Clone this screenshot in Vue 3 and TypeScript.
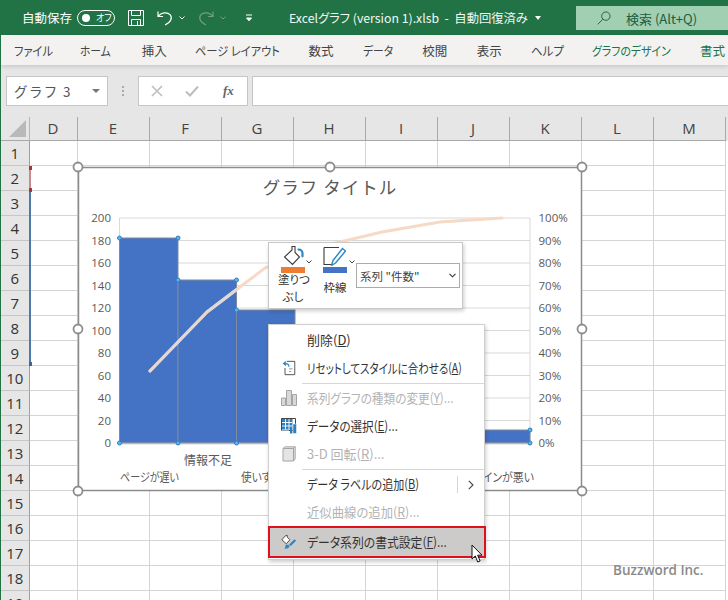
<script setup lang="ts">
const tabs = [
  { t: 'ファイル', w: 38, sx: .9 }, { t: 'ホーム', w: 33, sx: .86 }, { t: '挿入', w: 25, sx: 1 },
  { t: 'ページ レイアウト', w: 85, sx: .9 }, { t: '数式', w: 26, sx: 1 }, { t: 'データ', w: 31, sx: .86 },
  { t: '校閲', w: 26, sx: 1 }, { t: '表示', w: 26, sx: 1 }, { t: 'ヘルプ', w: 32, sx: .92 }
]
const contextTabs = [
  { t: 'グラフのデザイン', w: 80, sx: .87 }, { t: '書式', w: 27, sx: 1 }
]
const cols = [
  { name: 'D', w: 48 }, { name: 'E', w: 72 }, { name: 'F', w: 72 }, { name: 'G', w: 72 },
  { name: 'H', w: 72 }, { name: 'I', w: 72 }, { name: 'J', w: 72 }, { name: 'K', w: 72 },
  { name: 'L', w: 72 }, { name: 'M', w: 72 }
]
const rows = Array.from({ length: 19 }, (_, i) => i + 1)
const leftAxis = [200, 180, 160, 140, 120, 100, 80, 60, 40, 20, 0]
const gridY = leftAxis.map((_, i) => 218 + i * 22.5)
const handles = [
  [78, 167], [330, 167], [582, 167], [78, 329], [582, 329], [78, 491], [330, 491], [582, 491]
]
const points = [
  [119.5, 238], [178, 238], [178, 280], [236.5, 280], [236.5, 310],
  [119.5, 443], [178, 443], [236.5, 443], [530, 430], [530, 443]
]
const bars = [
  { x: 119.5, y: 238, w: 58.5 }, { x: 178, y: 280, w: 58.5 }, { x: 236.5, y: 310, w: 58.5 },
  { x: 295, y: 350, w: 58.5 }, { x: 471.5, y: 430, w: 58.5 }
]
interface Item { label: string; key: string; tail: string; sx: number; icon?: string; off?: boolean; sub?: boolean; sep?: boolean; hot?: boolean }
const items: Item[] = [
  { label: '削除(', key: 'D', tail: ')', sx: 1 },
  { label: 'リセットしてスタイルに合わせる(', key: 'A', tail: ')', sx: .806, icon: 'reset', sep: true },
  { label: '系列グラフの種類の変更(', key: 'Y', tail: ')...', sx: .896, icon: 'type', off: true },
  { label: 'データの選択(', key: 'E', tail: ')...', sx: .89, icon: 'data' },
  { label: '3-D 回転(', key: 'R', tail: ')...', sx: 1, icon: 'cube', off: true, sep: true },
  { label: 'データ ラベルの追加(', key: 'B', tail: ')', sx: .85, sub: true },
  { label: '近似曲線の追加(', key: 'R', tail: ')...', sx: .95, off: true },
  { label: 'データ系列の書式設定(', key: 'F', tail: ')...', sx: .91, icon: 'format', hot: true }
]
</script>

<template>
  <div class="app">
    <header class="titlebar">
      <span class="autosave">自動保存</span>
      <span class="toggle"><i class="knob"></i><em>オフ</em></span>
      <svg class="qa save" viewBox="0 0 16 16"><path d="M.5.5h15v15H.5zM3.500.5v5h9v-5M3.500 15.500v-6h9v6M9.500 11v4" fill="none" stroke="#fff" /></svg>
      <svg class="qa undo" viewBox="0 0 16 16"><path d="M1 1.500v5h5M1.300 6.200C4 2.600 10 1.500 13 4.700c2.500 2.800 1.500 7.300-5 10.300" fill="none" stroke="#fff" stroke-width="1.200" /></svg>
      <svg class="chev" viewBox="0 0 6 4"><path d="M.5.5 3 3 5.500.5" fill="none" stroke="#fff" /></svg>
      <svg class="qa redo" viewBox="0 0 16 16"><path d="M15 1.500v5h-5M14.700 6.200C12 2.600 6 1.500 3 4.700.5 7.500 1.500 12 8 15" fill="none" stroke="#6f9f84" stroke-width="1.200" /></svg>
      <svg class="chev dim" viewBox="0 0 6 4"><path d="M.5.5 3 3 5.500.5" fill="none" stroke="#6f9f84" /></svg>
      <svg class="more" viewBox="0 0 8 8"><path d="M1 1h6M1.500 4 4 6.800 6.500 4z" fill="#fff" stroke="#fff" /></svg>
      <span class="doc">Excelグラフ (version 1).xlsb&nbsp; -&nbsp; 自動回復済み<i class="caret"></i></span>
      <div class="search">
        <svg viewBox="0 0 15 15"><circle cx="9.500" cy="5.500" r="4.500" fill="none" stroke="#225e3c" /><path d="M6.300 8.800.8 14.300" stroke="#225e3c" /></svg>
        <span>検索 (Alt+Q)</span>
      </div>
    </header>

    <nav class="tabs">
      <span v-for="t in tabs" :key="t.t" class="tab" :style="{ width: t.w + 'px' }"><b :style="{ transform: `scaleX(${t.sx})` }">{{ t.t }}</b></span>
      <span v-for="t in contextTabs" :key="t.t" class="tab ctx" :style="{ width: t.w + 'px' }"><b :style="{ transform: `scaleX(${t.sx})` }">{{ t.t }}</b></span>
    </nav>

    <div class="formula">
      <div class="namebox"><span>グラフ 3</span><i class="caret dark"></i></div>
      <div class="dots"><i></i><i></i><i></i></div>
      <div class="fbtns">
        <svg viewBox="0 0 12 12"><path d="M1 1l10 10M11 1 1 11" stroke="#bdbdbd" stroke-width="1.600" /></svg>
        <svg viewBox="0 0 14 12"><path d="M1 6.500 5 10.500 13 1.500" fill="none" stroke="#bdbdbd" stroke-width="2" /></svg>
        <span class="fx">fx</span>
      </div>
      <div class="finput"></div>
    </div>

    <main class="sheet">
      <div class="colhead">
        <div class="corner"><i></i></div>
        <div v-for="c in cols" :key="c.name" class="colcell" :style="{ width: c.w + 'px' }">{{ c.name }}</div>
      </div>
      <div v-for="r in rows" :key="r" class="row">
        <div class="rowhead">{{ r }}</div>
        <div v-for="c in cols" :key="c.name" class="cell" :style="{ width: c.w + 'px' }"></div>
      </div>

      <i class="range red"></i>
      <i class="range blue"></i>

      <svg class="chart" viewBox="78 167 504 324">
        <rect x="78.500" y="167.500" width="503" height="323" fill="#fff" stroke="#8c8c8c" stroke-width="1.500" />
        <text x="330" y="194" class="ctitle" text-anchor="middle">グラフ タイトル</text>
        <line v-for="y in gridY" :key="y" x1="119.500" x2="530" :y1="y" :y2="y" stroke="#d9d9d9" />
        <line x1="119.500" x2="119.500" y1="218" y2="443" stroke="#d9d9d9" />
        <line x1="530" x2="530" y1="218" y2="443" stroke="#d9d9d9" />
        <text v-for="(v, i) in leftAxis" :key="'l' + v" x="111" :y="gridY[i] + 4" text-anchor="end" class="tick">{{ v }}</text>
        <text v-for="(v, i) in leftAxis" :key="'r' + v" x="538.500" :y="gridY[i] + 4" class="tick">{{ v * 0.5 }}%</text>
        <rect v-for="b in bars" :key="b.x" :x="b.x" :y="b.y" :width="b.w" :height="443 - b.y" fill="#4472c4" stroke="#7f8a9c" />
        <line x1="119.500" x2="530" y1="443.500" y2="443.500" stroke="#b5b5b5" stroke-width="1.500" />
        <polyline points="150,371 207,312 236,290 265,268 323,246 382,232 440,222 502,218" fill="none" stroke="#f6d9c6" stroke-width="3" stroke-linecap="round" stroke-linejoin="round" />
        <polyline points="150,371 207,312 236,290" fill="none" stroke="#e2d8d4" stroke-width="3" stroke-linecap="round" stroke-linejoin="round" />
        <circle v-for="p in points" :key="p.join()" :cx="p[0]" :cy="p[1]" r="2" fill="#62b4ec" stroke="#2c7fc4" />
        <text x="208" y="465" text-anchor="middle" class="cat">情報不足</text>
        <text x="120" y="482" class="cat" textLength="59" lengthAdjust="spacingAndGlyphs">ページが遅い</text>
        <text x="241" y="482" class="cat" textLength="50" lengthAdjust="spacingAndGlyphs">使いずらい</text>
        <text x="462" y="482" class="cat" textLength="72" lengthAdjust="spacingAndGlyphs">デザインが悪い</text>
        <circle v-for="h in handles" :key="h.join()" :cx="h[0]" :cy="h[1]" r="4.500" fill="#fff" stroke="#8c8c8c" stroke-width="1.800" />
      </svg>

      <div class="mini">
        <div class="mini-btn paint">
          <svg class="ico" viewBox="0 0 24 24"><path d="M10 1.500h3v6l4.500 4.500-7 7.500L2.500 12 10 5z" fill="#fff" stroke="#3c3c3c" stroke-width="1.100" /><path d="M16.500 4.500c2.500 0 4 1.800 4 3.800v3" fill="none" stroke="#2a86c8" stroke-width="2.200" stroke-linecap="round" /></svg>
          <svg class="chev2" viewBox="0 0 6 4"><path d="M.5.5 3 3 5.500.5" fill="none" stroke="#444" /></svg>
          <i class="swatch orange"></i>
          <span class="mini-label two">塗りつ<br />ぶし</span>
        </div>
        <div class="mini-btn outline">
          <svg class="ico" viewBox="0 0 24 24"><path d="M1 2.500h15M1 2.500v17h7" fill="none" stroke="#3c3c3c" stroke-width="1.100" /><path d="M8.500 20.500 10 15.500 19.500 3.500l3 2.500-10 12z" fill="#fff" stroke="#2a86c8" stroke-width="1.400" stroke-linejoin="round" /></svg>
          <svg class="chev2" viewBox="0 0 6 4"><path d="M.5.5 3 3 5.500.5" fill="none" stroke="#444" /></svg>
          <i class="swatch steel"></i>
          <span class="mini-label">枠線</span>
        </div>
        <div class="mini-select">
          <span>系列 "件数"</span>
          <svg viewBox="0 0 7 5"><path d="M.5.800 3.500 3.800 6.500.8" fill="none" stroke="#333" stroke-width="1.100" /></svg>
        </div>
      </div>

      <ul class="menu">
        <li v-for="it in items" :key="it.label" :class="{ off: it.off, sep: it.sep, hot: it.hot }">
          <span class="mi">
            <svg v-if="it.icon === 'reset'" viewBox="0 0 16 18"><path d="M5.500 1.500h9v15h-11V9" fill="#fff" stroke="#444" /><path d="M.8 4 4.500 1v6z" fill="#2a86c8" /><path d="M4 4c2.500 0 4 1 4 3.500" fill="none" stroke="#2a86c8" stroke-width="1.300" /><path d="M8 10h4M8 13h2.500" stroke="#888" /></svg>
            <svg v-else-if="it.icon === 'type'" viewBox="0 0 16 16"><path d="M.5 8h4v7.500h-4zM5.500 .5h5v15h-5zM11.500 4.500h4v11h-4z" fill="#d8d8d8" stroke="#a5a5a5" /></svg>
            <svg v-else-if="it.icon === 'data'" viewBox="0 0 16 16"><path d="M.5.500h14v12H.5z" fill="#fff" stroke="#444" /><path d="M1 1h10.500v10.500H1z" fill="#2d7fc0" /><path d="M4.500 1v10.500M8 1v10.500M1 4.500h10.500M1 8h10.500" stroke="#fff" stroke-width=".9" /><path d="M9 11h2.500v4.500H9z" fill="#2d7fc0" /><path d="M12 6h3.500v9.500H12z" fill="#2d7fc0" stroke="#fff" stroke-width=".5" /><path d="M.5 12.500h7.500v3H.5z" fill="#fff" /></svg>
            <svg v-else-if="it.icon === 'cube'" viewBox="0 0 14 16"><path d="M1 2.500 3 .8h10.200v12L11.500 15H1z" fill="#e4e4e4" stroke="#a5a5a5" /><path d="M1 2.500h10.500V15M11.500 2.500 13 .8" fill="none" stroke="#a5a5a5" /></svg>
            <svg v-else-if="it.icon === 'format'" viewBox="0 0 18 17"><path d="M5 1.500 1 6l5 4.500L10 6 7 3V1z" fill="#fff" stroke="#3c3c3c" /><path d="M9 11.500 15 5.500l2 1.500-6 6z" fill="#2a86c8" /><path d="M5 12c2-.8 4-.3 4.500 1 .3 1.800-2.500 3.500-5.500 3 1.200-.8.800-3 1-4z" fill="#2a86c8" /></svg>
          </span>
          <span class="txt" :style="{ transform: `scaleX(${it.sx})` }">{{ it.label }}<u>{{ it.key }}</u>{{ it.tail }}</span>
          <span v-if="it.sub" class="sub"><svg viewBox="0 0 6 10"><path d="M.8.800 5 5 .8 9.200" fill="none" stroke="#444" stroke-width="1.100" /></svg></span>
        </li>
      </ul>

      <svg class="cursor" viewBox="0 0 14 20"><path d="M1 1v14l3.300-3 2.400 6 2.400-1-2.400-5.800H11z" fill="#fff" stroke="#111" /></svg>
      <span class="mark">Buzzword Inc.</span>
    </main>
  </div>
</template>

<style scoped>
.app {
  width: 728px;
  height: 600px;
  overflow: hidden;
  position: relative;
  background: #e6e6e6;
  font-family: "Noto Sans CJK JP", "Noto Sans", sans-serif;
  font-feature-settings: "palt";
  border-left: 1px solid #217346;
  box-sizing: border-box;
}
.titlebar {
  height: 35px;
  margin-left: -1px;
  background: #217346;
  color: #fff;
  display: flex;
  align-items: center;
  font-size: 12.500px;
  padding-left: 22px;
  position: relative;
}
.autosave { width: 55px; }
.toggle {
  width: 38px;
  height: 16px;
  box-sizing: border-box;
  border: 1px solid #fff;
  border-radius: 8px;
  display: flex;
  align-items: center;
  padding-left: 4px;
  font-size: 9px;
}
.knob { width: 8px; height: 8px; border-radius: 50%; background: #fff; }
.toggle em { margin-left: 6px; font-style: normal; line-height: 1; }
.qa { width: 16px; height: 16px; flex: none; }
.save { margin-left: 13px; }
.undo { margin-left: 13px; }
.chev { width: 6px; height: 4px; margin-left: 6px; flex: none; }
.redo { margin-left: 13px; }
.chev.dim { margin-left: 6px; }
.more { width: 8px; height: 8px; margin-left: 19px; flex: none; }
.doc { margin-left: 36px; white-space: nowrap; font-size: 12.300px; display: flex; align-items: center; color: #f2f8f4; }
.caret {
  width: 0;
  height: 0;
  border: 3px solid transparent;
  border-top: 4px solid #fff;
  border-bottom: 0;
  margin-left: 7px;
}
.search {
  position: absolute;
  left: 576px;
  right: 0;
  top: 6px;
  height: 24px;
  background: #a0cfb2;
  color: #1f5c3b;
  display: flex;
  align-items: center;
  padding-left: 21px;
  font-size: 13px;
}
.search svg { width: 14px; height: 14px; margin-right: 15px; }
.tabs {
  height: 30px;
  background: #f3f2f1;
  display: flex;
  align-items: center;
  gap: 28.400px;
  padding-left: 13px;
  font-size: 12.500px;
  color: #444;
  white-space: nowrap;
  box-shadow: 0 2px 4px rgba(0, 0, 0, .12);
  position: relative;
}
.tab { flex: none; }
.tab b { display: inline-block; font-weight: 400; transform-origin: left center; }
.tabs .ctx { color: #217346; }
.formula {
  height: 52px;
  box-sizing: border-box;
  padding: 11px 0 11px 5px;
  display: flex;
  background: #e6e6e6;
}
.namebox, .fbtns, .finput {
  background: #fff;
  border: 1px solid #c6c6c6;
  box-sizing: border-box;
}
.namebox {
  width: 102px;
  display: flex;
  align-items: center;
  justify-content: space-between;
  padding: 0 7px;
  font-size: 13.500px;
  color: #555;
  letter-spacing: 1.400px;
  font-feature-settings: normal;
}
.caret.dark { border-top-color: #777; border-width: 4px; border-top-width: 4px; border-bottom: 0; margin: 0; }
.dots {
  width: 30px;
  display: flex;
  flex-direction: column;
  align-items: center;
  justify-content: center;
  gap: 2px;
}
.dots i { width: 2px; height: 2px; background: #aaa; }
.fbtns {
  width: 110px;
  display: flex;
  align-items: center;
  padding-left: 12px;
  gap: 22px;
}
.fbtns svg:first-child { width: 12px; height: 12px; }
.fbtns svg:nth-child(2) { width: 14px; height: 12px; }
.fx {
  font-family: "Liberation Serif", serif;
  font-style: italic;
  font-weight: 700;
  font-size: 13px;
  color: #666;
  margin-left: 2px;
}
.finput { flex: 1; margin-left: 4px; border-right: 0; }
.sheet { background: #fff; position: absolute; left: -1px; right: 0; top: 117px; bottom: 0; }
.colhead {
  height: 24px;
  display: flex;
  background: #e6e6e6;
  box-sizing: content-box;
}
.corner {
  width: 29.500px;
  flex: none;
  position: relative;
  border-bottom: 1px solid #a8a8a8;
  box-sizing: border-box;
  border-right: 1px solid #b5b5b5;
}
.corner i {
  position: absolute;
  left: 9px;
  bottom: 3px;
  border-style: solid;
  border-width: 0 0 17px 17px;
  border-color: transparent transparent #b9b9b9 transparent;
}
.colcell {
  flex: none;
  box-sizing: border-box;
  border-right: 1px solid #a8a8a8;
  border-bottom: 1px solid #a8a8a8;
  font: 15px/23px "Open Sans", sans-serif;
  color: #444;
  text-align: center;
}
.row { display: flex; height: 25px; }
.rowhead {
  width: 29.500px;
  flex: none;
  box-sizing: border-box;
  background: #e6e6e6;
  border-right: 1px solid #9f9f9f;
  border-bottom: 1px solid #c6c6c6;
  font: 15px/24px "Open Sans", sans-serif;
  color: #333;
  text-align: center;
  padding-left: 1px;
}
.cell {
  flex: none;
  box-sizing: border-box;
  border-right: 1px solid #d4d4d4;
  border-bottom: 1px solid #d4d4d4;
}
.range { position: absolute; left: 29px; width: 2px; }
.range.red { top: 49px; height: 26px; background: #c98a8e; }
.range.red::before, .range.red::after {
  content: "";
  position: absolute;
  left: 0;
  width: 3px;
  height: 4px;
  background: #a8343c;
}
.range.red::before { top: 0; }
.range.red::after { bottom: 0; }
.range.blue { top: 75px; height: 174px; background: #4d7aa8; }
.range.blue::after {
  content: "";
  position: absolute;
  left: 0;
  bottom: 0;
  width: 3px;
  height: 4px;
  background: #3565a8;
}
.chart { position: absolute; left: 78px; top: 50px; width: 504px; height: 324px; overflow: visible; }
.ctitle { font-size: 17.500px; fill: #595959; letter-spacing: 1px; font-feature-settings: normal; }
.tick { font-family: "Open Sans", sans-serif; font-size: 11.500px; fill: #595959; }
.cat { font-size: 12px; fill: #595959; }
.mini {
  position: absolute;
  left: 268px;
  top: 125px;
  width: 195px;
  height: 67px;
  box-sizing: border-box;
  background: #fff;
  border: 1px solid #c8c8c8;
  box-shadow: 1px 2px 4px rgba(0, 0, 0, .2);
  display: flex;
  padding-left: 9px;
}
.mini-btn { position: relative; width: 45px; }
.ico { position: absolute; left: 4px; top: 2px; width: 24px; height: 24px; }
.mini-btn.outline .ico { left: 0; top: 2px; }
.chev2 { position: absolute; left: 28px; top: 17px; width: 6px; height: 4px; }
.mini-btn.outline .chev2 { left: 26px; }
.swatch { position: absolute; left: 3px; top: 24px; width: 24px; height: 6px; }
.mini-btn.outline .swatch { left: 0; }
.orange { background: #ed7d31; }
.steel { background: #4472c4; }
.mini-label {
  position: absolute;
  left: 0;
  top: 30px;
  width: 30px;
  text-align: center;
  font-size: 11.500px;
  line-height: 17px;
  color: #333;
  white-space: nowrap;
}
.mini-btn.outline .mini-label { left: -3px; top: 36px; }
.mini-btn.paint .mini-label { top: 28px; }
.mini-btn.outline { margin-left: 0; width: 33px; }
.mini-select {
  width: 104px;
  height: 25px;
  margin-top: 20px;
  box-sizing: border-box;
  border: 1px solid #ababab;
  display: flex;
  align-items: center;
  justify-content: space-between;
  padding: 0 3px;
  font-size: 11.500px;
  color: #444;
}
.mini-select svg { width: 7px; height: 5px; }
.menu {
  position: absolute;
  left: 268px;
  top: 207px;
  width: 217px;
  margin: 0;
  padding: 1px 0 0;
  list-style: none;
  background: #fff;
  border: 1px solid #cfcfcf;
  box-sizing: border-box;
  box-shadow: 1px 2px 4px rgba(0, 0, 0, .2);
  height: 236px;
}
.menu li {
  height: 28px;
  display: flex;
  align-items: center;
  font-size: 13px;
  color: #333;
  white-space: nowrap;
  position: relative;
  box-sizing: border-box;
}
.menu li.sep::after {
  content: "";
  position: absolute;
  left: 33px;
  right: 0;
  bottom: -1.500px;
  height: 1px;
  background: #d6d6d6;
}
.menu li.sep { margin-bottom: 2px; }
.menu li.off { color: #b3b3b3; }
.menu li.hot {
  background: #cdcbc9;
  outline: 2px solid #df0f1c;
  outline-offset: -2px;
  margin: 0 -1px;
  height: 32px;
  width: 218px;
  padding-left: 1px;
}
.mi { width: 38px; display: flex; justify-content: center; padding-left: 2px; box-sizing: border-box; flex: none; }
.mi svg { width: 16px; height: 16px; }
.txt { display: inline-block; transform-origin: left center; margin-top: -1px; }
.txt u { text-underline-offset: 1px; }
.sub {
  position: absolute;
  right: 0;
  top: 6px;
  height: 17px;
  width: 26px;
  border-left: 1px solid #d6d6d6;
  display: flex;
  align-items: center;
  justify-content: center;
}
.sub svg { width: 6px; height: 10px; }
.cursor { position: absolute; left: 471px; top: 427px; width: 14px; height: 20px; }
.mark {
  position: absolute;
  left: 613px;
  top: 443px;
  font: 600 13.500px/20px "Open Sans", sans-serif;
  color: #8a8a8a;
  white-space: nowrap;
}
</style>
